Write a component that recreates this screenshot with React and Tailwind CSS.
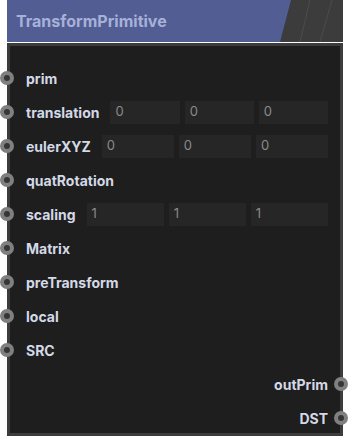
import React from "react";

const font = { fontFamily: "Inter, 'Noto Sans', sans-serif" };

function Socket({ side }) {
  return (
    <span
      className={
        "absolute top-1/2 -translate-y-1/2 w-[14px] h-[14px] rounded-full border-[4px] border-[#808080] bg-[#363636] " +
        (side === "left" ? "left-[-10px]" : "right-[-8px]")
      }
    />
  );
}

function Field({ v }) {
  return (
    <div className="flex-1 h-[23px] bg-[#262626] flex items-center pl-[5px] text-[13px] text-[#8a8a8a] font-normal">
      {v}
    </div>
  );
}

function InRow({ label, values }) {
  return (
    <div className="relative h-[34px] flex items-center pl-[16px] pr-[12px]">
      <Socket side="left" />
      <span className="text-[14px] font-bold text-[#d3d9e6] whitespace-nowrap">{label}</span>
      {values && (
        <div className="flex-1 flex gap-[5px] ml-[11px]">
          {values.map((v, i) => (
            <Field key={i} v={v} />
          ))}
        </div>
      )}
    </div>
  );
}

function OutRow({ label }) {
  return (
    <div className="relative h-[34px] flex items-center justify-end pr-[12px]">
      <Socket side="right" />
      <span className="text-[14px] font-bold text-[#d3d9e6]">{label}</span>
    </div>
  );
}

export default function App() {
  return (
    <div className="w-[350px] h-[436px] bg-white overflow-hidden" style={font}>
      <div className="ml-[7px] w-[336px]">
        <div className="relative h-[42px] bg-[#3c3c3c]">
          <div className="h-full w-[284px] bg-[#525d94] flex items-center pl-[9px] [clip-path:polygon(0_0,100%_0,calc(100%-11px)_100%,0_100%)]">
            <span className="text-[16px] font-bold text-[#a7b1d8]">TransformPrimitive</span>
          </div>
          <svg className="absolute left-0 top-0" width="336" height="42">
            <line x1="303" y1="0" x2="293" y2="42" stroke="#4c4c4c" strokeWidth="1" />
            <line x1="325" y1="0" x2="313" y2="42" stroke="#4c4c4c" strokeWidth="1" />
          </svg>
        </div>
        <div className="mt-[1px] h-[393px] border-[3px] border-[#3c3c3c] bg-[#1e1e1e] pt-[15px]">
          <InRow label="prim" />
          <InRow label="translation" values={["0", "0", "0"]} />
          <InRow label="eulerXYZ" values={["0", "0", "0"]} />
          <InRow label="quatRotation" />
          <InRow label="scaling" values={["1", "1", "1"]} />
          <InRow label="Matrix" />
          <InRow label="preTransform" />
          <InRow label="local" />
          <InRow label="SRC" />
          <OutRow label="outPrim" />
          <OutRow label="DST" />
        </div>
      </div>
    </div>
  );
}
